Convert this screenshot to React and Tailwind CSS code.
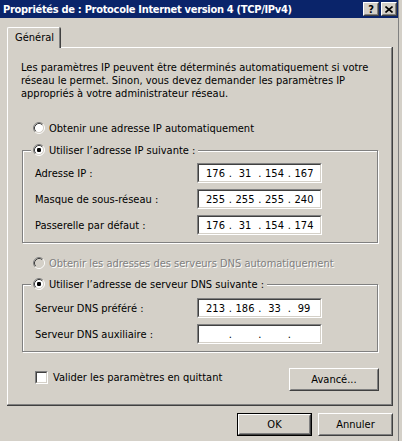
import React from "react";

// champ creusé (style Windows classique)
const Sunken = ({ className = "", inner = "bg-white", children }) => (
  <div className={`border border-t-[#808080] border-l-[#808080] border-b-white border-r-white ${className}`}>
    <div className={`h-full border border-t-[#404040] border-l-[#404040] border-b-[#d4d0c8] border-r-[#d4d0c8] ${inner}`}>
      {children}
    </div>
  </div>
);

const Raised = ({ className = "", children }) => (
  <div className={`bg-[#d4d0c8] border border-t-white border-l-white border-b-[#404040] border-r-[#404040] ${className}`}>
    <div className="h-full flex items-center justify-center border border-t-[#d4d0c8] border-l-[#d4d0c8] border-b-[#808080] border-r-[#808080]">
      {children}
    </div>
  </div>
);

const Radio = ({ checked, disabled }) => (
  <svg width="12" height="12" viewBox="0 0 12 12" className="shrink-0">
    <circle cx="6" cy="6" r="4.5" fill={disabled ? "#d4d0c8" : "#fff"} />
    <path d="M2.11 9.89A5.5 5.5 0 0 1 9.89 2.11" fill="none" stroke="#808080" strokeWidth="1" />
    <path d="M9.89 2.11A5.5 5.5 0 0 1 2.11 9.89" fill="none" stroke="#fff" strokeWidth="1" />
    <path d="M2.82 9.18A4.5 4.5 0 0 1 9.18 2.82" fill="none" stroke="#404040" strokeWidth="1" />
    <path d="M9.18 2.82A4.5 4.5 0 0 1 2.82 9.18" fill="none" stroke="#d4d0c8" strokeWidth="1" />
    {checked && <rect x="4" y="4" width="4" height="4" rx="1.2" fill="#000" />}
  </svg>
);

const IpField = ({ parts }) => (
  <Sunken className="w-[125px] h-[20px]">
    <div className="flex h-full items-center pl-[4.5px]">
      {parts.map((p, i) => (
        <React.Fragment key={i}>
          {i > 0 && <span className="w-[5.5px] text-center">.</span>}
          <span className="w-[24px] text-center">{p}</span>
        </React.Fragment>
      ))}
    </div>
  </Sunken>
);

const Row = ({ label, parts }) => (
  <div className="flex items-center h-[20px]">
    <span className="w-[174px] pl-[12px] whitespace-nowrap">{label}</span>
    <IpField parts={parts} />
  </div>
);

const GroupBox = ({ legend, className = "", children }) => (
  <div className={`ml-[14px] w-[356px] border border-[#808080] shadow-[1px_1px_0_#fff,inset_1px_1px_0_#fff] ${className}`}>
    <div className="-mt-[8px] ml-[8px] h-[14px] w-fit flex items-center gap-[4px] bg-[#d4d0c8] pl-[2px] pr-[3px]">
      <Radio checked />
      <span className="whitespace-nowrap">{legend}</span>
    </div>
    {children}
  </div>
);

export default function App() {
  return (
    <div className="w-[402px] h-[441px] bg-[#d4d0c8] flex overflow-hidden text-[11px] leading-[13px] text-black font-['DejaVu_Sans_Condensed','DejaVu_Sans',sans-serif]">
      <div className="w-[398px] flex flex-col">
        {/* barre de titre */}
        <div className="h-[18px] bg-[#0a246a] flex items-center pl-[3px] pr-[1px]">
          <span className="flex-1 font-bold text-white whitespace-nowrap tracking-[-0.3px]">
            Propriétés de : Protocole Internet version 4 (TCP/IPv4)
          </span>
          <Raised className="w-[16px] h-[14px]">
            <span className="font-bold text-[11px] leading-none">?</span>
          </Raised>
          <Raised className="w-[16px] h-[14px] ml-[2px]">
            <svg width="8" height="7" viewBox="0 0 8 7">
              <path d="M0.5 0.5L7.5 6.5M7.5 0.5L0.5 6.5" stroke="#000" strokeWidth="1.6" />
            </svg>
          </Raised>
        </div>

        {/* onglet */}
        <div className="mt-[9px] ml-[7px] w-[54px] h-[21px] -mb-px relative z-10 border-r border-r-[#404040] rounded-tr-[2px] bg-[#d4d0c8]">
          <div className="h-full border-t border-l border-t-white border-l-white border-r border-r-[#808080] rounded-tl-[2px] pl-[7px] pt-[3px]">
            Général
          </div>
        </div>

        {/* panneau */}
        <div className="ml-[7px] w-[386px] h-[359px] border-r border-b border-[#404040]">
          <div className="h-full flex flex-col border-t border-l border-t-white border-l-white border-r border-b border-r-[#808080] border-b-[#808080]">
            <p className="mt-[13px] ml-[13px] whitespace-nowrap">
              Les paramètres IP peuvent être déterminés automatiquement si votre
              <br />
              réseau le permet. Sinon, vous devez demander les paramètres IP
              <br />
              appropriés à votre administrateur réseau.
            </p>

            <div className="mt-[21px] ml-[25px] h-[14px] flex items-center gap-[4px]">
              <Radio />
              <span>Obtenir une adresse IP automatiquement</span>
            </div>

            <GroupBox legend="Utiliser l’adresse IP suivante :" className="mt-[15px] pb-[7px]">
              <div className="mt-[6px] flex flex-col gap-[6px]">
                <Row label="Adresse IP :" parts={["176", "31", "154", "167"]} />
                <Row label="Masque de sous-réseau :" parts={["255", "255", "255", "240"]} />
                <Row label="Passerelle par défaut :" parts={["176", "31", "154", "174"]} />
              </div>
            </GroupBox>

            <div className="mt-[13px] ml-[25px] h-[14px] flex items-center gap-[4px]">
              <Radio disabled />
              <span className="text-[#808080] [text-shadow:1px_1px_0_#fff]">
                Obtenir les adresses des serveurs DNS automatiquement
              </span>
            </div>

            <GroupBox legend="Utiliser l’adresse de serveur DNS suivante :" className="mt-[14px] pb-[7px]">
              <div className="mt-[7px] flex flex-col gap-[6px]">
                <Row label="Serveur DNS préféré :" parts={["213", "186", "33", "99"]} />
                <Row label="Serveur DNS auxiliaire :" parts={["", "", "", ""]} />
              </div>
            </GroupBox>

            <div className="mt-[16px] flex items-start justify-between pl-[27px] pr-[12px]">
              <div className="mt-[3px] flex items-center gap-[5px]">
                <Sunken className="w-[13px] h-[13px]" />
                <span>Valider les paramètres en quittant</span>
              </div>
              <Raised className="w-[90px] h-[23px]">
                <span>Avancé...</span>
              </Raised>
            </div>
          </div>
        </div>

        {/* boutons du bas */}
        <div className="mt-[7px] flex justify-end gap-[6px] pr-[5px]">
          <div className="w-[75px] h-[23px] border border-black">
            <Raised className="h-full">
              <span>OK</span>
            </Raised>
          </div>
          <Raised className="w-[75px] h-[23px]">
            <span>Annuler</span>
          </Raised>
        </div>
      </div>

      {/* bord droit de la fenêtre */}
      <div className="w-[4px] h-full border-l border-l-[#808080] bg-[#d4d0c8]" />
    </div>
  );
}
